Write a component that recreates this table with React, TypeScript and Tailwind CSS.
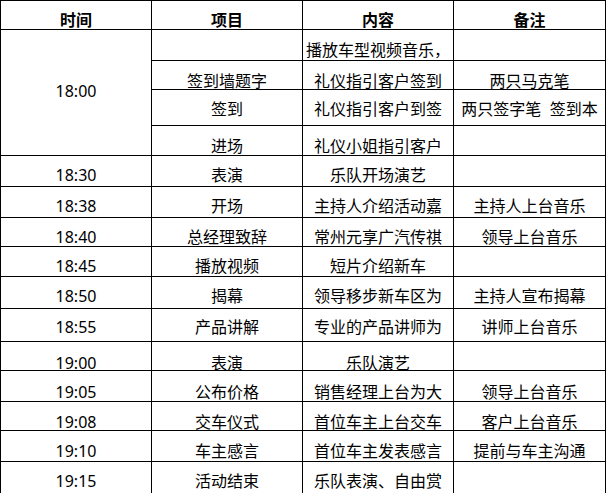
type Row = {
  time: string;
  item: string;
  content: string;
  note: string;
  pad: string;
};

// the 18:00 block is one merged time cell over four sub-rows
const openingRows: Omit<Row, "time">[] = [
  { item: "", content: "播放车型视频音乐，", note: "", pad: "pt-[12px]" },
  { item: "签到墙题字", content: "礼仪指引客户签到", note: "两只马克笔", pad: "pt-[12px]" },
  { item: "签到", content: "礼仪指引客户到签", note: "两只签字笔  签到本", pad: "pt-[11px]" },
  { item: "进场", content: "礼仪小姐指引客户", note: "", pad: "pt-[12px]" },
];

const rows: Row[] = [
  { time: "18:30", item: "表演", content: "乐队开场演艺", note: "", pad: "pt-[11px]" },
  { time: "18:38", item: "开场", content: "主持人介绍活动嘉", note: "主持人上台音乐", pad: "pt-[11px]" },
  { time: "18:40", item: "总经理致辞", content: "常州元享广汽传祺", note: "领导上台音乐", pad: "pt-[11px]" },
  { time: "18:45", item: "播放视频", content: "短片介绍新车", note: "", pad: "pt-[11px]" },
  { time: "18:50", item: "揭幕", content: "领导移步新车区为", note: "主持人宣布揭幕", pad: "pt-[11px]" },
  { time: "18:55", item: "产品讲解", content: "专业的产品讲师为", note: "讲师上台音乐", pad: "pt-[10px]" },
  { time: "19:00", item: "表演", content: "乐队演艺", note: "", pad: "pt-[13px]" },
  { time: "19:05", item: "公布价格", content: "销售经理上台为大", note: "领导上台音乐", pad: "pt-[13px]" },
  { time: "19:08", item: "交车仪式", content: "首位车主上台交车", note: "客户上台音乐", pad: "pt-[12px]" },
  { time: "19:10", item: "车主感言", content: "首位车主发表感言", note: "提前与车主沟通", pad: "pt-[12px]" },
  { time: "19:15", item: "活动结束", content: "乐队表演、自由赏", note: "", pad: "pt-[11px]" },
];

function Cell({ text, pad, className = "" }: { text: string; pad: string; className?: string }) {
  return (
    <div
      className={`flex items-start justify-center overflow-hidden whitespace-pre bg-white ${pad} ${className}`}
    >
      {text}
    </div>
  );
}

export default function App() {
  return (
    <div className="h-[493px] w-[606px] overflow-hidden bg-white font-['Noto_Sans','Noto_Sans_CJK_SC',sans-serif] text-[16px] leading-[16px] text-black">
      <div className="grid grid-cols-[150px_150px_150px_151px] grid-rows-[28px_30px_28px_35px_29px_30px_30px_28px_29px_31px_32px_28px_30px_28px_30px_40px] gap-px bg-black p-px pb-0">
        {["时间", "项目", "内容", "备注"].map((h) => (
          <Cell key={h} text={h} pad="pt-[11px]" className="bg-[#c0c0c0] font-bold" />
        ))}

        <Cell text="18:00" pad="pt-[53px]" className="row-span-4" />
        {openingRows.map((r, i) => (
          <div key={i} className="contents">
            <Cell text={r.item} pad={r.pad} />
            <Cell text={r.content} pad={r.pad} />
            <Cell text={r.note} pad={r.pad} />
          </div>
        ))}

        {rows.map((r) => (
          <div key={r.time} className="contents">
            <Cell text={r.time} pad={r.pad} />
            <Cell text={r.item} pad={r.pad} />
            <Cell text={r.content} pad={r.pad} />
            <Cell text={r.note} pad={r.pad} />
          </div>
        ))}
      </div>
    </div>
  );
}
